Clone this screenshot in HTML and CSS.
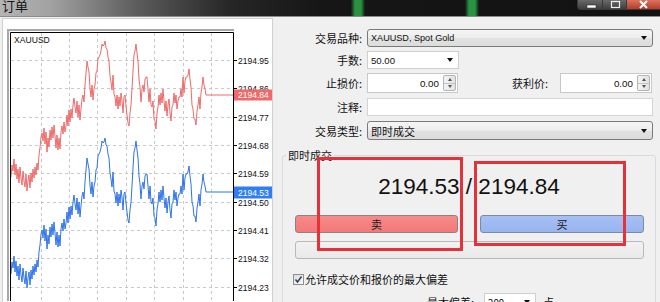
FILE: index.html
```html
<!DOCTYPE html>
<html lang="zh">
<head>
<meta charset="utf-8">
<title>订单</title>
<link rel="stylesheet" href="styles.css">
</head>
<body>
<div class="window">
  <div class="titlebar">
    <span class="title">订单</span>
    <div class="winbtns">
      <span class="wb wb-min"><svg width="26" height="10" viewBox="0 0 26 10"><rect x="9" y="5" width="9" height="3" fill="#fff" stroke="#333" stroke-width="0.6"/></svg></span>
      <span class="wb wb-max"><svg width="24" height="10" viewBox="0 0 24 10"><rect x="8.5" y="1.5" width="8" height="6" fill="none" stroke="#eee" stroke-width="1.2"/></svg></span>
      <span class="wb wb-close"><svg width="33" height="10" viewBox="0 0 33 10"><path d="M13 1 L20 8 M20 1 L13 8" stroke="#fff" stroke-width="2"/></svg></span>
    </div>
  </div>
  <div class="content">
    <div class="chartpanel">
      <svg class="chart" width="269" height="282" viewBox="3 20 269 282">
        <rect x="3" y="20" width="269" height="282" fill="#fff"/>
        <path d="M8 302 V31 H234" fill="none" stroke="#a8a8a8" stroke-width="2"/>
        <g stroke="#c9c9c9" stroke-width="1" stroke-dasharray="3 3">
          <line x1="41.5" y1="34" x2="41.5" y2="302"/>
          <line x1="69.5" y1="34" x2="69.5" y2="302"/>
          <line x1="97.5" y1="34" x2="97.5" y2="302"/>
          <line x1="126.5" y1="34" x2="126.5" y2="302"/>
          <line x1="154.5" y1="34" x2="154.5" y2="302"/>
          <line x1="183.5" y1="34" x2="183.5" y2="302"/>
          <line x1="211.5" y1="34" x2="211.5" y2="302"/>
          <line x1="11" y1="61.5" x2="233" y2="61.5"/>
          <line x1="11" y1="89.5" x2="233" y2="89.5"/>
          <line x1="11" y1="118.5" x2="233" y2="118.5"/>
          <line x1="11" y1="146.5" x2="233" y2="146.5"/>
          <line x1="11" y1="174.5" x2="233" y2="174.5"/>
          <line x1="11" y1="203.5" x2="233" y2="203.5"/>
          <line x1="11" y1="231.5" x2="233" y2="231.5"/>
          <line x1="11" y1="259.5" x2="233" y2="259.5"/>
          <line x1="11" y1="288.5" x2="233" y2="288.5"/>
        </g>
        <g stroke="#000" stroke-width="1">
          <line x1="233" y1="61.5" x2="237" y2="61.5"/>
          <line x1="233" y1="89.5" x2="237" y2="89.5"/>
          <line x1="233" y1="118.5" x2="237" y2="118.5"/>
          <line x1="233" y1="146.5" x2="237" y2="146.5"/>
          <line x1="233" y1="174.5" x2="237" y2="174.5"/>
          <line x1="233" y1="203.5" x2="237" y2="203.5"/>
          <line x1="233" y1="231.5" x2="237" y2="231.5"/>
          <line x1="233" y1="259.5" x2="237" y2="259.5"/>
          <line x1="233" y1="288.5" x2="237" y2="288.5"/>
        </g>
        <defs>
          <polyline id="price" fill="none" points="11,178 12,166 13,172 14,160 15,176 16,165 17,180 18,170 19,184 20,168 21,179 22,186 23,172 24,182 25,188 26,175 27,192 28,182 29,176 30,189 31,174 32,183 33,170 34,179 35,168 36,176 37,164 38,171 39,156 40,149 41,138 42,134 43,142 44,129 45,145 46,133 47,153 48,139 49,148 50,131 51,141 52,128 53,139 54,126 55,137 56,149 57,136 58,151 59,139 60,150 61,133 62,127 63,135 64,123 65,133 66,127 67,116 68,127 69,111 70,123 71,110 72,119 73,106 74,99 75,108 76,114 77,102 78,118 79,106 80,121 81,110 82,100 83,96 84,103 85,86 86,74 87,62 88,68 89,73 90,89 91,98 92,86 93,101 94,90 95,86 96,74 97,72 98,60 99,58 100,56 101,52 102,45 103,47 104,46 105,42 106,49 107,50 108,58 109,62 110,77 111,83 112,91 113,76 114,95 115,98 116,107 117,96 118,110 119,98 120,107 121,94 122,101 123,114 124,98 125,96 126,107 127,116 128,124 129,127 130,114 131,106 132,90 133,72 134,56 135,52 136,45 137,54 138,62 139,80 140,88 141,103 142,90 143,86 144,93 145,80 146,78 147,78 148,90 149,103 150,90 151,106 152,108 153,102 154,120 155,122 156,130 157,114 158,108 159,96 160,106 161,94 162,104 163,90 164,102 165,112 166,102 167,117 168,106 169,100 170,114 171,122 172,108 173,106 174,94 175,104 176,96 177,110 178,102 179,98 180,98 181,90 182,98 183,78 184,94 185,82 186,78 187,78 188,76 189,70 190,80 191,88 192,106 193,110 194,120 195,120 196,126 197,112 198,106 199,98 200,110 201,94 202,88 203,78 204,86 205,90 206,96 233,96"/>
        </defs>
        <use href="#price" stroke="#ef6a6a" stroke-width="1"/>
        <use href="#price" transform="translate(0 97)" stroke="#2f74ea" stroke-width="1"/>
        <path d="M10.5 302 V33.5 H233.5 V302" fill="none" stroke="#000" stroke-width="1"/>
        <text x="14" y="43.5" class="sym">XAUUSD</text>
        <g class="axis">
          <text x="238" y="64.5">2194.95</text>
          <text x="238" y="92.5">2194.86</text>
          <text x="238" y="121.5">2194.77</text>
          <text x="238" y="149.5">2194.68</text>
          <text x="238" y="177.5">2194.59</text>
          <text x="238" y="206.5">2194.50</text>
          <text x="238" y="234.5">2194.41</text>
          <text x="238" y="262.5">2194.32</text>
          <text x="238" y="291.5">2194.23</text>
        </g>
        <rect x="234" y="90.5" width="38" height="11" fill="#f06868"/>
        <text x="238" y="99.2" class="axis tag">2194.84</text>
        <rect x="234" y="187.5" width="38" height="12" fill="#2f7ff0"/>
        <text x="238" y="196.7" class="axis tag">2194.53</text>
      </svg>
    </div>
    <div class="form">
      <div class="row r1">
        <span class="lbl">交易品种:</span>
        <div class="combo list w-full"><span class="val sm">XAUUSD, Spot Gold</span><i class="arrow"></i></div>
      </div>
      <div class="row r2">
        <span class="lbl">手数:</span>
        <div class="combo edit w-lot"><span class="val">50.00</span><i class="arrow"></i></div>
      </div>
      <div class="row r3">
        <span class="lbl">止损价:</span>
        <div class="spin w-spin"><span class="num">0.00</span><span class="spinbtn"><i class="up"></i><i class="dn"></i></span></div>
        <span class="lbl lbl2">获利价:</span>
        <div class="spin w-spin2"><span class="num">0.00</span><span class="spinbtn"><i class="up"></i><i class="dn"></i></span></div>
      </div>
      <div class="row r4">
        <span class="lbl">注释:</span>
        <div class="textbox w-full"></div>
      </div>
      <div class="row r5">
        <span class="lbl">交易类型:</span>
        <div class="combo list w-full"><span class="val cjk">即时成交</span><i class="arrow"></i></div>
      </div>
      <fieldset class="group">
        <legend>即时成交</legend>
        <div class="quote">2194.53 / 2194.84</div>
        <div class="btns">
          <button class="tbtn sell">卖</button>
          <button class="tbtn buy">买</button>
        </div>
        <div class="bar"></div>
        <div class="chk"><span class="box"><svg width="9" height="9" viewBox="0 0 9 9"><path d="M1.5 4.5 L3.5 7 L7.5 1.5" fill="none" stroke="#2a3a5a" stroke-width="1.4"/></svg></span><span>允许成交价和报价的最大偏差</span></div>
        <div class="dev"><span class="lbl3">最大偏差:</span><div class="combo edit w-dev"><span class="val">200</span><i class="arrow"></i></div><span class="unit">点</span></div>
      </fieldset>
    </div>
  </div>
  <div class="mark m1"></div>
  <div class="mark m2"></div>
</div>
</body>
</html>
```

FILE: styles.css
```css
* { box-sizing: border-box; }
html, body { margin: 0; padding: 0; }
body {
  width: 660px;
  height: 302px;
  overflow: hidden;
  background: #f0f0f0;
  font-family: "Liberation Sans", "Noto Sans CJK SC", sans-serif;
  color: #111;
}
.window { position: relative; width: 660px; height: 302px; overflow: hidden; }

.titlebar {
  position: relative;
  height: 17px;
  border-bottom: 1px solid #8c8c8c;
  background:
    linear-gradient(90deg, transparent 351px, rgba(46,190,80,0.75) 355px, rgba(46,190,80,0.75) 361px, transparent 365px),
    linear-gradient(90deg, transparent 465px, rgba(46,190,80,0.75) 469px, rgba(46,190,80,0.75) 475px, transparent 479px),
    linear-gradient(90deg, #b4b4b4 0, #a2a2a2 50px, #5a5a5a 140px, #262626 230px, #161616 320px, #121212 100%);
}
.title {
  position: absolute;
  left: 2px;
  top: -3px;
  font-family: "Noto Sans CJK SC", sans-serif;
  font-size: 13px;
  line-height: 17px;
  color: #151515;
}
.winbtns {
  position: absolute;
  right: 0;
  top: 0;
  display: flex;
}
.wb { display: block; height: 10px; border: 1px solid #3a3a3a; border-top: 0; }
.wb svg { display: block; }
.wb-min { width: 26px; border-radius: 0 0 0 4px; background: linear-gradient(#6a6a6a, #3e3e3e); }
.wb-max { width: 24px; background: linear-gradient(#6a6a6a, #3e3e3e); border-left: 0; }
.wb-close { width: 33px; background: linear-gradient(#d8745f, #b83a2a); border-left: 0; border-right: 0; }

.content { display: flex; align-items: flex-start; }

.chartpanel {
  margin: 1px 0 0 2px;
  width: 271px;
  height: 290px;
  border: 1px solid #d0d0d0;
  background: #fff;
}
.chart { display: block; }
.chart text { font-family: "Liberation Sans", sans-serif; }
.chart .sym { font-size: 8.6px; fill: #111; }
.chart .axis text, .chart .axis { font-size: 8.5px; fill: #111; }
.chart .tag { fill: #fff; }

.form { padding: 12px 0 0 9px; width: 387px; }
.row { display: flex; align-items: center; }
.r1 { height: 18px; }
.r2 { height: 18px; margin-top: 4px; }
.r3 { height: 20px; margin-top: 4px; }
.r4 { height: 18px; margin-top: 5px; }
.r5 { height: 19px; margin-top: 5px; }

.lbl {
  width: 80px;
  text-align: right;
  font-family: "Noto Sans CJK SC", sans-serif;
  font-size: 11px;
  line-height: 14px;
  margin-right: 5px;
  color: #111;
}
.lbl2 { width: 90px; margin-right: 12px; }

.combo {
  position: relative;
  height: 100%;
  display: flex;
  align-items: center;
  padding-left: 3px;
  font-size: 9.6px;
  color: #111;
}
.combo .val.sm { font-size: 9.1px; }
.combo.list {
  border: 1px solid #7a7a7a;
  border-radius: 3px;
  background: linear-gradient(#f6f6f6, #ececec 50%, #e2e2e2 50%, #dcdcdc);
}
.combo.edit {
  border: 1px solid #cfcfcf;
  background: #fff;
}
.combo .val.cjk { font-family: "Noto Sans CJK SC", sans-serif; font-size: 11px; }
.arrow {
  position: absolute;
  right: 5px;
  top: 50%;
  margin-top: -2px;
  width: 0;
  height: 0;
  border-left: 3.5px solid transparent;
  border-right: 3.5px solid transparent;
  border-top: 4px solid #111;
}
.w-full { width: 286px; }
.w-lot { width: 92px; }
.w-spin { width: 91px; }
.w-spin2 { width: 92px; }
.w-dev { width: 52px; }

.spin {
  height: 100%;
  display: flex;
  align-items: center;
  border: 1px solid #c9c9c9;
  background: #fff;
  padding: 1px;
}
.spin .num { flex: 1; text-align: right; padding-right: 4px; font-size: 9.8px; }
.spinbtn {
  width: 13px;
  height: 100%;
  display: flex;
  flex-direction: column;
  border: 1px solid #b5b5b5;
  border-radius: 2px;
  background: linear-gradient(90deg, #f4f4f4, #e2e2e2);
}
.spinbtn i { flex: 1; display: flex; align-items: center; justify-content: center; }
.spinbtn i + i { border-top: 1px solid #c4c4c4; }
.spinbtn .up::after { content: ""; border-left: 2.5px solid transparent; border-right: 2.5px solid transparent; border-bottom: 3px solid #555; }
.spinbtn .dn::after { content: ""; border-left: 2.5px solid transparent; border-right: 2.5px solid transparent; border-top: 3px solid #555; }

.textbox {
  height: 100%;
  border: 1px solid #d4d4d4;
  background: #fff;
}

.group {
  margin: 9px 0 0 0;
  padding: 0;
  width: 374px;
  height: 160px;
  border: 1px solid #d5dbe0;
  border-radius: 3px;
  min-inline-size: 0;
}
.group legend {
  margin-left: 3px;
  padding: 0 2px;
  font-family: "Noto Sans CJK SC", sans-serif;
  font-size: 11px;
  line-height: 13px;
  color: #111;
}
.quote {
  margin-top: 12px;
  text-align: center;
  font-family: "Liberation Sans", sans-serif;
  font-size: 22.5px;
  line-height: 26px;
  color: #111;
}
.btns {
  display: flex;
  gap: 22px;
  margin: 15px 0 0 12px;
}
.tbtn {
  display: flex;
  align-items: center;
  justify-content: center;
  height: 18px;
  padding: 0;
  border: 1px solid #858585;
  border-radius: 3px;
  font-family: "Noto Sans CJK SC", sans-serif;
  font-size: 11px;
  line-height: 14px;
  color: #1a1a1a;
}
.sell { width: 163px; background: linear-gradient(#f88a8a, #f47878); }
.buy { width: 164px; background: linear-gradient(#a6c0f4, #98b4ee); border-color: #7e8aa0; }
.bar {
  margin: 8px 0 0 12px;
  width: 349px;
  height: 18px;
  border: 1px solid #b9b9b9;
  border-radius: 3px;
  background: linear-gradient(#f2f2f2, #e9e9e9);
}
.chk {
  display: flex;
  align-items: center;
  margin: 13px 0 0 10px;
  font-family: "Noto Sans CJK SC", sans-serif;
  font-size: 11px;
  line-height: 14px;
  color: #111;
}
.chk .box {
  width: 11px;
  height: 11px;
  margin-right: 1px;
  border: 1px solid #8e8f8f;
  background: linear-gradient(135deg, #dcdcdc, #fafafa);
  display: flex;
  align-items: center;
  justify-content: center;
}
.chk .box svg { display: block; }
.dev {
  display: flex;
  align-items: center;
  height: 17px;
  margin: 7px 0 0 144px;
  font-family: "Noto Sans CJK SC", sans-serif;
  font-size: 11px;
}
.lbl3 { margin-right: 10px; }
.dev .combo { height: 17px; }
.unit { margin-left: 7px; }

.mark {
  position: absolute;
  border: 3px solid #e5313a;
}
.m1 { left: 317px; top: 157px; width: 146px; height: 94px; }
.m2 { left: 474px; top: 161px; width: 152px; height: 85px; }
```
